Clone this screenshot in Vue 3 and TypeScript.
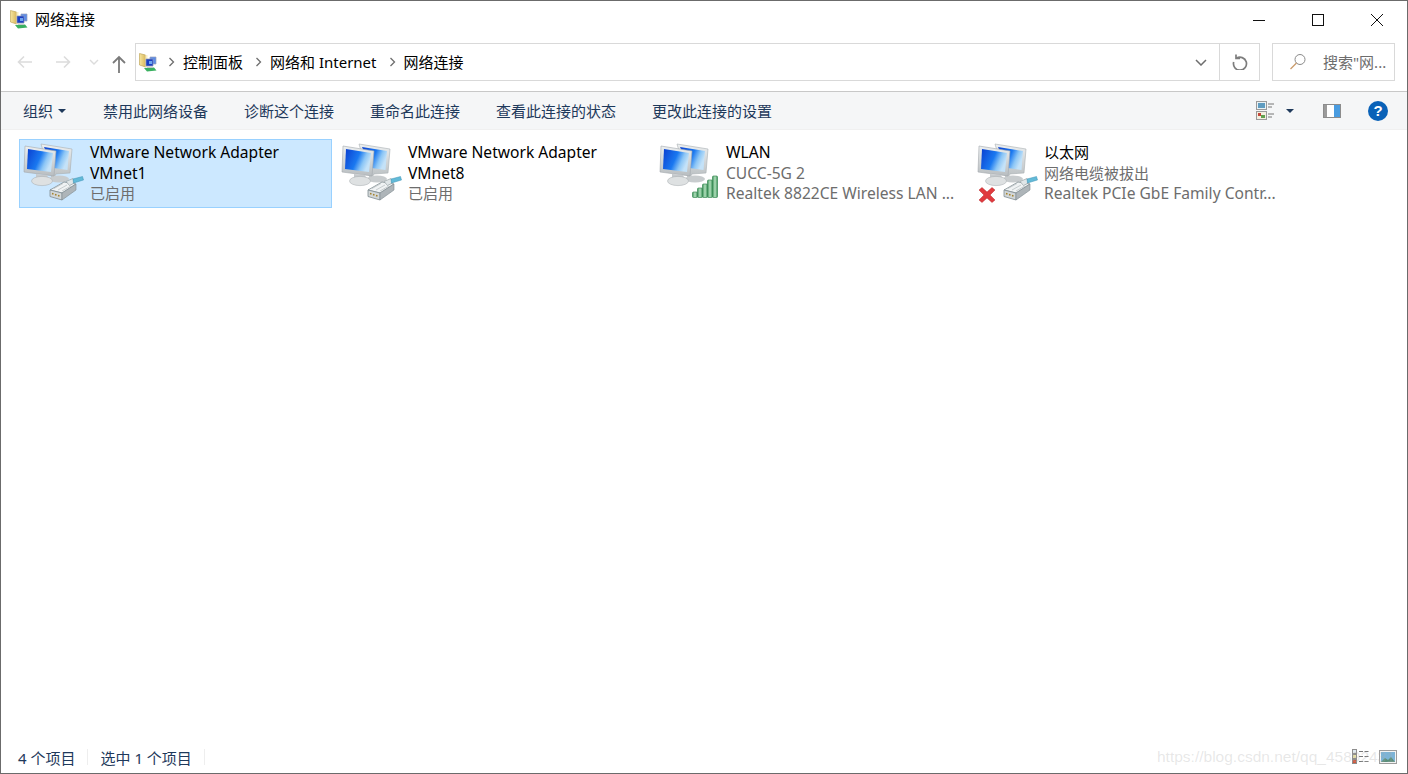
<template>
  <div class="window">
    <!-- shared icon shapes -->
    <svg class="defs" width="0" height="0">
      <defs>
        <linearGradient id="screen" x1="0" y1="0" x2="1" y2="0.4">
          <stop offset="0" stop-color="#0a3fd0" />
          <stop offset="0.55" stop-color="#1a78f0" />
          <stop offset="0.8" stop-color="#8cc6f6" />
          <stop offset="1" stop-color="#c4e2f8" />
        </linearGradient>
        <linearGradient id="bezel" x1="0" y1="0" x2="0" y2="1">
          <stop offset="0" stop-color="#eceff0" />
          <stop offset="1" stop-color="#b8bdc0" />
        </linearGradient>
        <linearGradient id="bar" x1="0" y1="0" x2="1" y2="0">
          <stop offset="0" stop-color="#3b9358" />
          <stop offset="0.5" stop-color="#b4e0be" />
          <stop offset="1" stop-color="#3b9358" />
        </linearGradient>
        <linearGradient id="folder" x1="0" y1="0" x2="1" y2="0">
          <stop offset="0" stop-color="#f6e5a0" />
          <stop offset="1" stop-color="#d9b95e" />
        </linearGradient>
        <symbol id="computer" viewBox="0 0 70 70">
          <path d="M26 6l31 5-2 24-14 1-3 5-4-7z" fill="url(#bezel)" stroke="#a8aeb2" stroke-width=".6" />
          <path d="M29 9l25 4-1.500 19-14-2z" fill="url(#screen)" />
          <ellipse cx="44" cy="41" rx="10" ry="3.500" fill="#c8ccce" />
          <path d="M10 8l31 5-2 25-30-4z" fill="url(#bezel)" stroke="#a2a8ac" stroke-width=".6" />
          <path d="M13 11l25 4-2 19-24-3z" fill="url(#screen)" />
          <path d="M21 36l11 1 2 5-13-1z" fill="#c6cacd" />
          <ellipse cx="27" cy="43" rx="10.500" ry="4.600" fill="#dee1e2" stroke="#adb2b5" stroke-width=".6" />
        </symbol>
        <symbol id="plug" viewBox="0 0 70 70">
          <path d="M35 52l14-8 12 2-14 9z" fill="#f0f3f4" stroke="#7f8b90" stroke-width=".8" />
          <path d="M35 52l12 3v7l-12-3.500z" fill="#d2d7d9" stroke="#7f8b90" stroke-width=".8" />
          <path d="M47 55l14-9v6l-14 10z" fill="#aeb5b9" stroke="#7f8b90" stroke-width=".6" />
          <path d="M37 55.500l1.500.5M40 56.500l1.500.5M43 57.500l1.500.5" stroke="#a5832c" stroke-width="1.400" />
          <path d="M39 50.500l9-5M43 52l9-5M47 53l9-5" stroke="#b4bbbf" stroke-width=".7" />
          <path d="M51 43.500l7-3 1.500 4.500-5 2.500z" fill="#e0e6e8" stroke="#8a9599" stroke-width=".6" />
          <path d="M58 41l9.500-2.500 1 3.500-10 3z" fill="#62bad8" stroke="#3f92b4" stroke-width=".5" />
        </symbol>
        <symbol id="signal" viewBox="0 0 26 23">
          <rect x=".5" y="17" width="5" height="5.500" rx="1" fill="url(#bar)" stroke="#3a8a54" stroke-width=".7" />
          <rect x="5.500" y="13" width="5" height="9.500" rx="1" fill="url(#bar)" stroke="#3a8a54" stroke-width=".7" />
          <rect x="10.500" y="9" width="5" height="13.500" rx="1" fill="url(#bar)" stroke="#3a8a54" stroke-width=".7" />
          <rect x="15.500" y="5" width="5" height="17.500" rx="1" fill="url(#bar)" stroke="#3a8a54" stroke-width=".7" />
          <rect x="20.500" y="1" width="5" height="21.500" rx="1" fill="url(#bar)" stroke="#3a8a54" stroke-width=".7" />
        </symbol>
        <symbol id="cross" viewBox="0 0 18 16">
          <path d="M1 3l3-2.500 5 4.500 5-4.500 3 2.500-5 5 5 5-3 2.500-5-4.500-5 4.500-3-2.500 5-5z" fill="#e03a3e" stroke="#b8262b" stroke-width=".5" />
        </symbol>
        <symbol id="netfolder" viewBox="0 0 19 19">
          <path d="M.5.500l6 1.500v12l-6-2z" fill="url(#folder)" stroke="#b89c4a" stroke-width=".6" />
          <path d="M6.500 2h2v12h-2z" fill="#f8eec4" />
          <path d="M11 4h6v7h-6z" fill="#5c8ce8" stroke="#9aa2b8" stroke-width=".7" />
          <path d="M7 6h7v7H7z" fill="#1a3fc4" stroke="#8e97b5" stroke-width=".7" />
          <path d="M10 8h3v3h-3z" fill="#6ea4ee" />
          <path d="M5 15l10-.5 2.500 3L8 18.500z" fill="#3ab060" />
          <path d="M8 13.500h6V15H8z" fill="#c4c8cc" />
        </symbol>
      </defs>
    </svg>

    <header class="titlebar">
      <svg class="app-icon" width="19" height="19"><use href="#netfolder" /></svg>
      <span class="title">网络连接</span>
      <div class="win-controls">
        <svg width="14" height="14" viewBox="0 0 14 14"><path d="M1 7.500h12" stroke="#111" /></svg>
        <svg width="14" height="14" viewBox="0 0 14 14"><rect x="1.500" y="1.500" width="11" height="11" fill="none" stroke="#111" /></svg>
        <svg width="14" height="14" viewBox="0 0 14 14"><path d="M1 1l12 12M13 1L1 13" stroke="#111" /></svg>
      </div>
    </header>

    <div class="navrow">
      <div class="nav">
        <svg class="back" width="16" height="14" viewBox="0 0 16 14"><path d="M15 7H2M7 1.500L1.500 7 7 12.500" fill="none" stroke="#dcdcdc" stroke-width="1.600" /></svg>
        <svg class="forward" width="16" height="14" viewBox="0 0 16 14"><path d="M1 7h13M9 1.500L14.500 7 9 12.500" fill="none" stroke="#dcdcdc" stroke-width="1.600" /></svg>
        <svg class="recent" width="10" height="6" viewBox="0 0 10 6"><path d="M1 1l4 4 4-4" fill="none" stroke="#dcdcdc" stroke-width="1.400" /></svg>
        <svg class="up" width="16" height="18" viewBox="0 0 16 18"><path d="M8 18V2M2 8l6-6 6 6" fill="none" stroke="#7a7a7a" stroke-width="1.800" /></svg>
      </div>
      <div class="address">
        <svg class="addr-icon" width="19" height="19"><use href="#netfolder" /></svg>
        <template v-for="crumb in crumbs" :key="crumb">
          <svg class="crumb-sep" width="7" height="10" viewBox="0 0 7 10"><path d="M1.500 1l4 4-4 4" fill="none" stroke="#6e6e6e" stroke-width="1.300" /></svg>
          <span class="crumb">{{ crumb }}</span>
        </template>
        <svg class="addr-drop" width="12" height="7" viewBox="0 0 12 7"><path d="M1 1l5 5 5-5" fill="none" stroke="#6e6e6e" stroke-width="1.500" /></svg>
        <div class="refresh">
          <svg width="16" height="16" viewBox="0 0 16 16"><path d="M4.500 4.200A6.500 6.500 0 1 1 1.700 8M4 .5v4h4" fill="none" stroke="#7d7d7d" stroke-width="1.700" /></svg>
        </div>
      </div>
      <div class="search">
        <svg width="18" height="18" viewBox="0 0 18 18"><circle cx="11" cy="6.500" r="5" fill="none" stroke="#8a8a8a" /><path d="M7.500 10L1.500 16" stroke="#c99a6a" stroke-width="1.300" /></svg>
        <span class="search-text">搜索"网...</span>
      </div>
    </div>

    <div class="toolbar">
      <span class="tool org">组织<i class="caret"></i></span>
      <span v-for="t in tools" :key="t" class="tool">{{ t }}</span>
      <div class="tool-right">
        <svg class="view-icon" width="18" height="20" viewBox="0 0 18 20">
          <rect x=".5" y=".5" width="10" height="8" fill="#e9f2f5" stroke="#9a9a9a" />
          <rect x="2" y="2" width="7" height="5" fill="#5f9cc0" />
          <rect x=".5" y="10.500" width="10" height="8" fill="#f4efe0" stroke="#9a9a9a" />
          <rect x="2" y="12" width="3" height="3" fill="#c2483a" /><rect x="5" y="14" width="4" height="3" fill="#62a050" />
          <path d="M12 3h6M12 6h4M12 13h6M12 16h4" stroke="#777" />
        </svg>
        <i class="caret view-caret"></i>
        <svg class="pane-icon" width="18" height="14" viewBox="0 0 18 14">
          <rect x=".5" y=".5" width="17" height="13" fill="#fff" stroke="#8c8c8c" />
          <rect x="1" y="1" width="3" height="12" fill="#9b9b9b" />
          <rect x="11" y="1" width="6" height="12" fill="#4a9ce0" />
        </svg>
        <span class="help">?</span>
      </div>
    </div>

    <main class="content">
      <div v-for="c in connections" :key="c.id" class="conn" :class="{ selected: c.selected }">
        <svg class="conn-icon" width="64" height="64" viewBox="5 2 64 64">
          <use href="#computer" width="70" height="70" />
          <use v-if="c.kind !== 'wifi'" href="#plug" width="70" height="70" />
          <use v-if="c.kind === 'wifi'" href="#signal" x="41" y="37" width="26" height="23" />
          <use v-if="c.kind === 'off'" href="#cross" x="9" y="49" width="18" height="16" />
        </svg>
        <div class="conn-text">
          <div :class="{ latin: isLatin(c.name) }">{{ c.name }}</div>
          <div class="conn-sub" :class="{ latin: isLatin(c.status) }">{{ c.status }}</div>
          <div v-if="c.device" class="conn-sub latin">{{ c.device }}</div>
        </div>
      </div>
    </main>

    <footer class="statusbar">
      <span>4 个项目</span>
      <i class="status-sep"></i>
      <span>选中 1 个项目</span>
      <i class="status-sep"></i>
      <div class="status-views">
        <svg width="18" height="16" viewBox="0 0 18 16">
          <rect x=".5" y=".5" width="4" height="4" fill="#dfe9ef" stroke="#8d8d8d" />
          <rect x=".5" y="5.500" width="4" height="4" fill="#e8e2a8" stroke="#8d8d8d" />
          <rect x=".5" y="10.500" width="4" height="4" fill="#d0583c" stroke="#8d8d8d" />
          <path d="M7 2.500h4M12.500 2.500h4M7 7.500h4M12.500 7.500h4M7 12.500h4M12.500 12.500h4" stroke="#777" />
        </svg>
        <svg width="18" height="14" viewBox="0 0 18 14">
          <rect x=".5" y=".5" width="17" height="13" fill="#f4f4f4" stroke="#9d9d9d" />
          <rect x="2" y="2" width="14" height="10" fill="#7db4d6" />
          <path d="M2 12l4-4 3 2 3-3 4 5z" fill="#5a8f7a" />
        </svg>
      </div>
    </footer>
    <div class="watermark">https://blog.csdn.net/qq_45892431</div>
  </div>
</template>

<script setup lang="ts">
interface Connection {
  id: number
  name: string
  status: string
  device?: string
  kind: 'wired' | 'wifi' | 'off'
  selected?: boolean
}

const crumbs = ['控制面板', '网络和 Internet', '网络连接']
const tools = ['禁用此网络设备', '诊断这个连接', '重命名此连接', '查看此连接的状态', '更改此连接的设置']

const connections: Connection[] = [
  { id: 1, name: 'VMware Network Adapter VMnet1', status: '已启用', kind: 'wired', selected: true },
  { id: 2, name: 'VMware Network Adapter VMnet8', status: '已启用', kind: 'wired' },
  { id: 3, name: 'WLAN', status: 'CUCC-5G 2', device: 'Realtek 8822CE Wireless LAN ...', kind: 'wifi' },
  { id: 4, name: '以太网', status: '网络电缆被拔出', device: 'Realtek PCIe GbE Family Contr...', kind: 'off' },
]

// the latin strings run a bit wider than the CJK ones
function isLatin(s: string) {
  return /^[\x00-\x7f]+$/.test(s)
}
</script>

<style>
html, body { margin: 0; background: #fff; }
</style>

<style scoped>
.window {
  position: relative; box-sizing: border-box;
  width: 1408px; height: 774px; overflow: hidden;
  display: flex; flex-direction: column;
  background: #fff; border: 1px solid #6b6b6b;
  font-family: "Noto Sans", "Noto Sans CJK SC", sans-serif;
  font-size: 15px; color: #000;
}
.defs { position: absolute; }

.titlebar {
  height: 41px; flex-shrink: 0;
  display: flex; align-items: center;
  padding-left: 9px;
}
.app-icon { margin-top: -4px; }
.title { margin-left: 6px; margin-top: -5px; line-height: 20px; }
.win-controls {
  margin-left: auto; margin-right: 23px; margin-top: -4px;
  display: flex; gap: 45px;
}

.navrow {
  height: 49px; flex-shrink: 0;
  display: flex; align-items: flex-start;
  box-sizing: border-box; padding-top: 1px;
}
.nav {
  width: 134px; height: 38px; flex-shrink: 0;
  display: flex; align-items: center;
  box-sizing: border-box; padding-left: 16px;
}
.forward { margin-left: 22px; }
.recent { margin-left: 18px; }
.up { margin-left: 12px; margin-top: 4px; }

.address {
  width: 1125px; height: 38px; flex-shrink: 0;
  box-sizing: border-box; border: 1px solid #d9d9d9;
  display: flex; align-items: center;
  padding-left: 3px;
}
.addr-icon { margin-right: 10px; }
.crumb-sep { margin-right: 8px; }
.crumb { margin-right: 12px; line-height: 20px; }
.addr-drop { margin-left: auto; margin-right: 12px; }
.refresh {
  width: 39px; height: 100%;
  border-left: 1px solid #d9d9d9;
  display: flex; align-items: center; justify-content: center;
}
.search {
  width: 123px; height: 38px; flex-shrink: 0;
  box-sizing: border-box; margin-left: 12px;
  border: 1px solid #d9d9d9;
  display: flex; align-items: center; gap: 16px;
  padding-left: 16px;
  color: #6d6d6d; white-space: nowrap; font-size: 15px;
}
.search-text { margin-top: -2px; }

.toolbar {
  height: 39px; flex-shrink: 0;
  box-sizing: border-box;
  display: flex; align-items: center;
  background: #f5f6f7;
  border-top: 1px solid #c8c8c8;
  border-bottom: 1px solid #f0f0f0;
  padding-left: 22px;
  color: #1e395b;
}
.tool { margin-right: 36px; white-space: nowrap; line-height: 20px; }
.org { display: inline-flex; align-items: center; margin-right: 37px; }
.caret {
  display: inline-block; margin-left: 5px;
  border: 4px solid transparent; border-top: 4px solid #1e395b; border-bottom: 0;
}
.tool-right { margin-left: auto; display: flex; align-items: center; margin-right: 19px; }
.view-caret { margin-left: 12px; }
.pane-icon { margin-left: 29px; }
.help {
  width: 20px; height: 20px; margin-left: 27px; border-radius: 50%;
  background: #0a62b8; color: #fff;
  font: bold 15px/20px "Liberation Sans", sans-serif; text-align: center;
}

.content {
  flex: 1; min-height: 0;
  display: grid; grid-template-columns: repeat(4, 313px); column-gap: 5px;
  align-content: start;
  padding: 9px 0 0 18px;
}
.conn {
  height: 69px; box-sizing: border-box;
  border: 1px solid transparent;
  display: flex;
}
.conn.selected { background: #cce8ff; border-color: #99d1ff; }
.conn-icon { flex-shrink: 0; }
.conn-text {
  margin-left: 6px; padding-top: 2px; width: 232px;
  line-height: 20.500px; font-size: 15px;
}
.conn-sub { color: #6d6d6d; white-space: nowrap; }
.latin { font-size: 15.600px; }

.statusbar {
  height: 30px; flex-shrink: 0;
  box-sizing: border-box;
  display: flex; align-items: center;
  padding: 0 0 2px 17px;
  color: #1e395b;
}
.status-sep { width: 1px; height: 16px; background: #eeeeee; margin: 0 12px; }
.status-views { margin-left: auto; display: flex; align-items: center; gap: 9px; margin-right: 10px; }

.watermark {
  position: absolute; left: 1156px; bottom: 7px;
  font: 15.500px "Liberation Sans", sans-serif;
  color: rgba(170, 170, 170, 0.28);
  white-space: nowrap; pointer-events: none;
}
</style>
